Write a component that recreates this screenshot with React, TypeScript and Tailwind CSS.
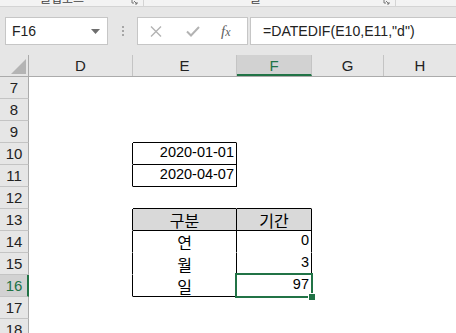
import React from "react";

type Cell = {
  t?: string;
  align?: "l" | "c" | "r";
  br?: boolean;
  bb?: boolean;
  bg?: boolean;
  ko?: boolean;
  sel?: boolean;
};

const cols = [
  { k: "D", w: "w-[104px]" },
  { k: "E", w: "w-[104px]" },
  { k: "F", w: "w-[75px]" },
  { k: "G", w: "w-[72px]" },
  { k: "H", w: "flex-1" },
];

const rows: { n: number; cells: Record<string, Cell> }[] = [
  { n: 7, cells: {} },
  { n: 8, cells: {} },
  { n: 9, cells: { E: { bb: true } } },
  { n: 10, cells: { D: { br: true }, E: { t: "2020-01-01", align: "r", br: true, bb: true } } },
  { n: 11, cells: { D: { br: true }, E: { t: "2020-04-07", align: "r", br: true, bb: true } } },
  { n: 12, cells: { E: { bb: true }, F: { bb: true } } },
  {
    n: 13,
    cells: {
      D: { br: true },
      E: { t: "구분", align: "c", br: true, bb: true, bg: true, ko: true },
      F: { t: "기간", align: "c", br: true, bb: true, bg: true, ko: true },
    },
  },
  { n: 14, cells: { D: { br: true }, E: { t: "연", align: "c", br: true, ko: true }, F: { t: "0", align: "r", br: true } } },
  { n: 15, cells: { D: { br: true }, E: { t: "월", align: "c", br: true, ko: true }, F: { t: "3", align: "r", br: true } } },
  {
    n: 16,
    cells: {
      D: { br: true },
      E: { t: "일", align: "c", br: true, bb: true, ko: true },
      F: { t: "97", align: "r", br: true, bb: true, sel: true },
    },
  },
  { n: 17, cells: {} },
  { n: 18, cells: {} },
];

const sans = "font-['Liberation_Sans',Arial,sans-serif]";
const ko = "font-['Noto_Sans_CJK_KR','Liberation_Sans',sans-serif]";

export default function App() {
  return (
    <div className={`w-[456px] h-[333px] overflow-hidden bg-white ${sans} text-black select-none`}>
      {/* ribbon bottom strip */}
      <div className="h-[7px] bg-[#f3f3f3] border-b border-[#d4d4d4] flex overflow-hidden relative">
        <div className="ml-[40px] h-[6px] overflow-hidden w-[48px]">
          <div className={`${ko} text-[12px] leading-[14px] text-[#444] mt-[-9px]`}>클립보드</div>
        </div>
        <div className="ml-[43px] h-[6px] overflow-hidden w-[8px]">
          <svg width="8" height="6" viewBox="0 0 8 6" className="block">
            <path d="M1 0 V3 H3" stroke="#777" fill="none" strokeWidth="1" />
            <path d="M3 1 L6 4 M4 4 H6 V2" stroke="#777" fill="none" strokeWidth="1" />
          </svg>
        </div>
        <div className="ml-[4px] w-px h-[6px] bg-[#d4d4d4]" />
        <div className="ml-[106px] h-[6px] overflow-hidden w-[22px]">
          <div className={`${ko} text-[12px] leading-[14px] text-[#444] mt-[-9px]`}>글꼴</div>
        </div>
        <div className="ml-[111px] h-[6px] overflow-hidden w-[8px]">
          <svg width="8" height="6" viewBox="0 0 8 6" className="block">
            <path d="M1 0 V3 H3" stroke="#777" fill="none" strokeWidth="1" />
            <path d="M3 1 L6 4 M4 4 H6 V2" stroke="#777" fill="none" strokeWidth="1" />
          </svg>
        </div>
        <div className="ml-[4px] w-px h-[6px] bg-[#d4d4d4]" />
      </div>

      {/* formula bar */}
      <div className="h-[48px] bg-[#e6e6e6] pt-[10px] flex items-start">
        <div className="ml-[5px] w-[103px] h-[28px] bg-white border border-[#c6c6c6] flex items-center pl-[6px] pr-[6px]">
          <span className="text-[14px] leading-none text-[#222] flex-1">F16</span>
          <svg width="9" height="5" viewBox="0 0 9 5" className="mr-[1px]">
            <path d="M0 0 H9 L4.5 5 Z" fill="#6e6e6e" />
          </svg>
        </div>
        <div className="ml-[13px] w-[3px] h-[28px] flex flex-col items-center justify-center gap-[2px]">
          <div className="w-[2px] h-[2px] bg-[#a6a6a6]" />
          <div className="w-[2px] h-[2px] bg-[#a6a6a6]" />
          <div className="w-[2px] h-[2px] bg-[#a6a6a6]" />
        </div>
        <div className="ml-[13px] w-[111px] h-[28px] bg-white border border-[#c6c6c6] flex items-center">
          <svg width="12" height="11" viewBox="0 0 12 11" className="ml-[12px]">
            <path d="M1 0.5 L11 10.5 M11 0.5 L1 10.5" stroke="#b3b3b3" strokeWidth="1.4" fill="none" />
          </svg>
          <svg width="14" height="11" viewBox="0 0 14 11" className="ml-[24px]">
            <path d="M1 5.5 L5 9.5 L13 1" stroke="#b3b3b3" strokeWidth="2" fill="none" />
          </svg>
          <span className="ml-[21px] font-['Liberation_Serif',serif] italic text-[#5f5f5f] text-[15px] leading-none">
            f<span className="text-[12px]">x</span>
          </span>
        </div>
        <div className="ml-[2px] flex-1 h-[28px] bg-white border border-[#c6c6c6] border-r-0 flex items-center pl-[12px]">
          <span className="text-[14.1px] leading-none text-[#222]">=DATEDIF(E10,E11,"d")</span>
        </div>
      </div>

      {/* column header */}
      <div className="h-[22px] flex bg-[#e6e6e6] border-b border-[#ababab]">
        <div className="w-[29px] h-full border-r border-[#ababab] relative">
          <svg width="15" height="15" viewBox="0 0 15 15" className="absolute left-[11px] top-[4px]">
            <path d="M15 0 V15 H0 Z" fill="#b4b4b4" />
          </svg>
        </div>
        {cols.map((c) => {
          const selected = c.k === "F";
          return (
            <div
              key={c.k}
              className={`${c.w} h-full flex items-center justify-center text-[15px] leading-none ${
                c.k === "H" ? "" : "border-r border-[#c4c4c4]"
              } ${selected ? "bg-[#d2d2d2] text-[#217346] border-b-2 border-b-[#217346]" : "text-[#222]"}`}
            >
              <span className={selected ? "mt-[2px]" : ""}>{c.k}</span>
            </div>
          );
        })}
      </div>

      {/* rows */}
      {rows.map((r) => {
        const selRow = r.n === 16;
        return (
          <div key={r.n} className="h-[22px] flex">
            <div
              className={`w-[29px] h-full border-b border-[#c4c4c4] flex items-center justify-center text-[15px] leading-none ${
                selRow
                  ? "bg-[#d2d2d2] text-[#217346] border-r-2 border-r-[#217346]"
                  : "bg-[#e6e6e6] text-[#222] border-r border-r-[#ababab]"
              }`}
            >
              <span className={selRow ? "ml-[1px]" : ""}>{r.n}</span>
            </div>
            {cols.map((c) => {
              const cell = r.cells[c.k] || {};
              const justify =
                cell.align === "r" ? "justify-end pr-[2px]" : cell.align === "c" ? "justify-center" : "justify-start pl-[2px]";
              return (
                <div
                  key={c.k}
                  className={`${c.w} h-full relative flex items-center ${justify} border-r border-b ${
                    cell.br ? "border-r-black" : "border-r-transparent"
                  } ${cell.bb ? "border-b-black" : "border-b-transparent"} ${cell.bg ? "bg-[#d9d9d9]" : ""}`}
                >
                  {cell.t && (
                    <span
                      className={`${cell.ko ? `${ko} text-[16px]` : "text-[14.5px]"} leading-none text-black ${
                        cell.ko ? "" : "mb-[2px]"
                      }`}
                    >
                      {cell.t}
                    </span>
                  )}
                  {cell.sel && (
                    <>
                      <div className="absolute left-[-2px] top-[-2px] w-[78px] h-[25px] border-2 border-[#217346] pointer-events-none" />
                      <div className="absolute left-[71px] top-[18px] w-[6px] h-[6px] bg-[#217346] border border-white box-content" />
                    </>
                  )}
                </div>
              );
            })}
          </div>
        );
      })}
    </div>
  );
}
